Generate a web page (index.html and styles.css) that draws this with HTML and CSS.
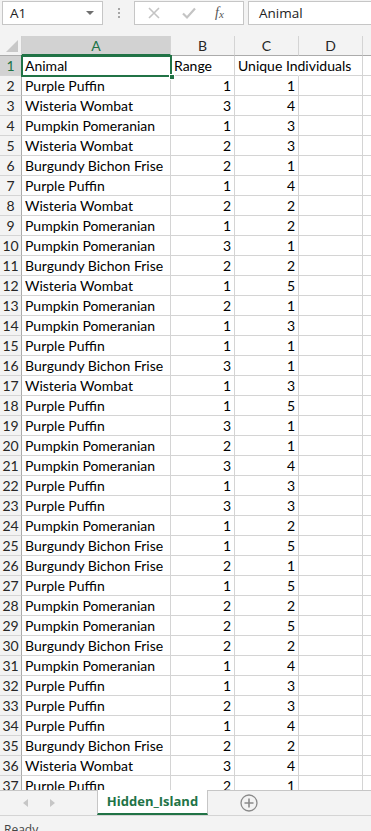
FILE: index.html
```html
<!DOCTYPE html>
<html>
<head>
<meta charset="utf-8">
<link rel="stylesheet" href="styles.css">
</head>
<body>
<div class="app">
  <div class="fbar">
    <div class="namebox"><span class="ref">A1</span><span class="caret"></span></div>
    <div class="dots"><i></i><i></i><i></i></div>
    <div class="btns">
      <svg class="ico" width="14" height="14" viewBox="0 0 14 14"><path d="M2 2 L12 12 M12 2 L2 12" stroke="#c4c4c4" stroke-width="1.6" fill="none"/></svg>
      <svg class="ico" width="16" height="14" viewBox="0 0 16 14"><path d="M2 7.5 L6 11.5 L14 2.5" stroke="#c4c4c4" stroke-width="2.2" fill="none"/></svg>
      <span class="fx">f<sub>x</sub></span>
    </div>
    <div class="finput">Animal</div>
  </div>
  <div class="sheet">
    <div class="grid" id="grid">
      <div class="corner"><span class="tri"></span></div>
      <div class="ch sel">A</div><div class="ch">B</div><div class="ch">C</div><div class="ch">D</div><div class="ch last"></div>
    </div>
    <div class="selbox"><span class="handle"></span></div>
  </div>
  <div class="tabs">
    <div class="nav"><span class="arr l"></span><span class="arr r"></span></div>
    <div class="tab">Hidden_Island</div>
    <div class="add">
      <svg width="20" height="20" viewBox="0 0 20 20"><circle cx="10" cy="10" r="8" stroke="#8a8a8a" stroke-width="1.3" fill="none"/><path d="M10 5.5 V14.5 M5.5 10 H14.5" stroke="#8a8a8a" stroke-width="1.6"/></svg>
    </div>
  </div>
  <div class="status">Ready</div>
</div>
<script src="app.js"></script>
</body>
</html>
```
FILE: app.js
```js
var rows = [
["Purple Puffin",1,1],["Wisteria Wombat",3,4],["Pumpkin Pomeranian",1,3],["Wisteria Wombat",2,3],
["Burgundy Bichon Frise",2,1],["Purple Puffin",1,4],["Wisteria Wombat",2,2],["Pumpkin Pomeranian",1,2],
["Pumpkin Pomeranian",3,1],["Burgundy Bichon Frise",2,2],["Wisteria Wombat",1,5],["Pumpkin Pomeranian",2,1],
["Pumpkin Pomeranian",1,3],["Purple Puffin",1,1],["Burgundy Bichon Frise",3,1],["Wisteria Wombat",1,3],
["Purple Puffin",1,5],["Purple Puffin",3,1],["Pumpkin Pomeranian",2,1],["Pumpkin Pomeranian",3,4],
["Purple Puffin",1,3],["Purple Puffin",3,3],["Pumpkin Pomeranian",1,2],["Burgundy Bichon Frise",1,5],
["Burgundy Bichon Frise",2,1],["Purple Puffin",1,5],["Pumpkin Pomeranian",2,2],["Pumpkin Pomeranian",2,5],
["Burgundy Bichon Frise",2,2],["Pumpkin Pomeranian",1,4],["Purple Puffin",1,3],["Purple Puffin",2,3],
["Purple Puffin",1,4],["Burgundy Bichon Frise",2,2],["Wisteria Wombat",3,4],["Purple Puffin",2,1]
];
var g = document.getElementById('grid');
var h = '';
h += '<div class="rh sel">1</div><div class="c">Animal</div><div class="c">Range</div><div class="c ov">Unique Individuals</div><div class="c nl"></div><div class="c"></div>';
for (var i = 0; i < rows.length; i++) {
  var r = rows[i];
  h += '<div class="rh">' + (i + 2) + '</div><div class="c">' + r[0] + '</div><div class="c n">' + r[1] + '</div><div class="c n">' + r[2] + '</div><div class="c"></div><div class="c"></div>';
}
g.insertAdjacentHTML('beforeend', h);
```
FILE: styles.css
```css
* { box-sizing: border-box; }
html, body { margin: 0; padding: 0; }
body { width: 371px; height: 831px; overflow: hidden; background: #fff; font-family: "Lato", "Noto Sans", sans-serif; }
.app { display: flex; flex-direction: column; height: 831px; }

.fbar { height: 36px; flex: none; background: #f3f3f3; display: flex; align-items: flex-start; padding-top: 1px; }
.namebox { width: 101px; height: 24px; margin-left: 2px; background: #fff; border: 1px solid #c6c6c6; display: flex; align-items: center; justify-content: space-between; padding: 0 8px 0 7px; }
.ref { font-family: "Open Sans", "Noto Sans", sans-serif; font-size: 13.5px; color: #222; }
.caret { width: 0; height: 0; border-left: 4px solid transparent; border-right: 4px solid transparent; border-top: 4px solid #6f6f6f; }
.dots { width: 31px; height: 24px; display: flex; flex-direction: column; align-items: center; justify-content: center; gap: 2px; }
.dots i { display: block; width: 2px; height: 2px; background: #a6a6a6; }
.btns { width: 110px; height: 24px; background: #fff; border: 1px solid #c6c6c6; display: flex; align-items: center; padding-left: 12px; gap: 0; }
.btns .ico { display: block; }
.btns .ico:first-child { margin-right: 20px; }
.btns .ico:nth-child(2) { margin-right: 18px; }
.fx { font-family: "Liberation Serif", serif; font-style: italic; font-size: 14px; color: #555; line-height: 1; }
.fx sub { font-size: 11px; vertical-align: -1px; }
.finput { flex: 1; height: 24px; margin-left: 4px; background: #fff; border: 1px solid #c6c6c6; border-right: none; font-family: "Open Sans", "Noto Sans", sans-serif; font-size: 13.5px; color: #222; padding-left: 10px; line-height: 22px; }

.sheet { flex: none; height: 754px; overflow: hidden; position: relative; }
.grid { display: grid; grid-template-columns: 22px 149px 64px 64px 64px 20px; grid-auto-rows: 20px; }
.corner { background: #f3f3f3; border-right: 1px solid #cfcfcf; border-bottom: 1px solid #ababab; position: relative; }
.tri { position: absolute; right: 3px; bottom: 3px; width: 0; height: 0; border-left: 12px solid transparent; border-bottom: 12px solid #c8c8c8; }
.ch { background: #f3f3f3; border-right: 1px solid #d4d4d4; border-bottom: 1px solid #ababab; text-align: center; font-size: 14px; line-height: 20px; color: #262626; font-family: "Lato", sans-serif; }
.ch.sel { background: #d2d2d2; color: #217346; border-bottom: 2px solid #217346; }
.rh { background: #f3f3f3; border-right: 1px solid #ababab; border-bottom: 1px solid #d4d4d4; text-align: center; font-size: 14px; line-height: 19px; color: #262626; }
.rh.sel { background: #d2d2d2; color: #217346; }
.c { border-right: 1px solid #d4d4d4; border-bottom: 1px solid #d4d4d4; font-size: 14px; line-height: 19px; padding: 0 3px; white-space: nowrap; color: #000; }
.c.n { text-align: right; }
.c.ov { overflow: visible; border-right-color: transparent; }

.selbox { position: absolute; left: 21px; top: 19px; width: 151px; height: 22px; border: 2px solid #217346; pointer-events: none; }
.handle { position: absolute; right: -5px; bottom: -5px; width: 6px; height: 6px; background: #217346; border: 1px solid #fff; }

.tabs { flex: none; height: 25px; background: #f3f3f3; border-top: 1px solid #c6c6c6; display: flex; align-items: stretch; }
.nav { width: 97px; display: flex; align-items: center; padding-left: 23px; gap: 22px; }
.arr { width: 0; height: 0; border-top: 4px solid transparent; border-bottom: 4px solid transparent; }
.arr.l { border-right: 5px solid #c6c6c6; }
.arr.r { border-left: 5px solid #c6c6c6; }
.tab { width: 111px; margin-top: -1px; background: #fff; border-left: 1px solid #c6c6c6; border-right: 1px solid #c6c6c6; border-bottom: 2px solid #217346; color: #217346; font-family: "Open Sans", "Noto Sans", sans-serif; font-weight: 700; font-size: 13px; text-align: center; line-height: 23px; }
.add { width: 60px; display: flex; align-items: center; justify-content: center; padding-left: 22px; }
.add svg { display: block; }
.status { flex: none; height: 16px; background: #f3f3f3; border-top: 1px solid #d4d4d4; font-family: "Open Sans", "Noto Sans", sans-serif; font-size: 12px; color: #444; padding-left: 4px; line-height: 27px; overflow: hidden; }
```
